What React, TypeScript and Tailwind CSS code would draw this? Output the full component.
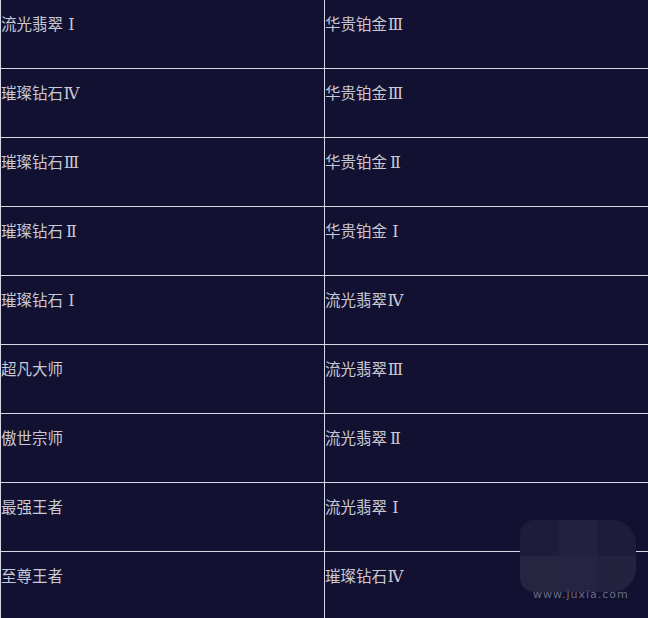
const rows: [string, string][] = [
  ["流光翡翠", "Ⅰ", "华贵铂金", "Ⅲ"],
  ["璀璨钻石", "Ⅳ", "华贵铂金", "Ⅲ"],
  ["璀璨钻石", "Ⅲ", "华贵铂金", "Ⅱ"],
  ["璀璨钻石", "Ⅱ", "华贵铂金", "Ⅰ"],
  ["璀璨钻石", "Ⅰ", "流光翡翠", "Ⅳ"],
  ["超凡大师", "", "流光翡翠", "Ⅲ"],
  ["傲世宗师", "", "流光翡翠", "Ⅱ"],
  ["最强王者", "", "流光翡翠", "Ⅰ"],
  ["至尊王者", "", "璀璨钻石", "Ⅳ"],
].map(([a, an, b, bn]) => [a + "|" + an, b + "|" + bn]) as [string, string][];

function Rank({ value }: { value: string }) {
  const [name, num] = value.split("|");
  return (
    <>
      {name}
      {num && (
        <span
          className="inline-block w-[1.05em] text-center text-[16px]"
          style={{ fontFamily: '"DejaVu Serif", "Liberation Serif", serif' }}
        >
          {num}
        </span>
      )}
    </>
  );
}

export default function App() {
  return (
    <div
      className="relative w-[648px] h-[618px] overflow-hidden bg-[#121131]"
      style={{ fontFamily: '"Noto Sans CJK SC", "Noto Sans", sans-serif' }}
    >
      <div className="border-l border-[#d6d6e4]">
        {rows.map(([a, b], i) => (
          <div
            key={i}
            className={`grid grid-cols-[324px_1fr] h-[69px] ${i < rows.length - 1 ? "border-b border-[#d6d6e4]" : ""}`}
          >
            <div className="border-r border-[#d6d6e4] pt-[12px] text-[15.5px] leading-[22px] text-[#c9c9d3]">
              <Rank value={a} />
            </div>
            <div className="pt-[12px] text-[15.5px] leading-[22px] text-[#c9c9d3]">
              <Rank value={b} />
            </div>
          </div>
        ))}
      </div>

      {/* watermark */}
      <div className="absolute left-[520px] top-[520px] w-[116px] h-[72px]">
        <div className="grid grid-cols-3 grid-rows-2 w-full h-full overflow-hidden rounded-tl-[14px] rounded-tr-[24px] rounded-br-[24px] rounded-bl-[14px]">
          <div className="bg-[#1d1c3a]" />
          <div className="bg-[#22213f]" />
          <div className="bg-[#1d1c3a]" />
          <div className="bg-[#262541]" />
          <div className="bg-[#252442]" />
          <div className="bg-[#24233f]" />
        </div>
      </div>
      <div
        className="absolute left-[533px] top-[588px] text-[11px] leading-[14px] tracking-[1px] text-[#6c6b82]"
        style={{ fontFamily: '"DejaVu Sans", sans-serif' }}
      >
        www.juxia.com
      </div>
    </div>
  );
}
